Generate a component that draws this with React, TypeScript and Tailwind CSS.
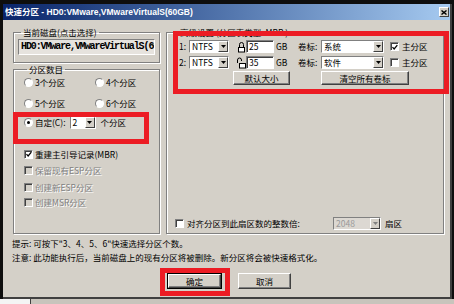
import React from 'react';

type Kids = { children?: React.ReactNode };

const Check = ({ checked = false, disabled = false }: { checked?: boolean; disabled?: boolean }) => (
  <span
    className={`flex h-[9px] w-[9px] shrink-0 items-center justify-center border border-t-[#808080] border-l-[#808080] border-r-white border-b-white shadow-[inset_1px_1px_0_#404040] ${
      disabled ? 'bg-[#D4D0C8]' : 'bg-white'
    }`}
  >
    {checked && (
      <svg width="7" height="7" viewBox="0 0 7 7" className="ml-px mt-px">
        <path d="M0.5 3 L2.5 5.2 L6.2 0.8" fill="none" stroke="#000" strokeWidth="1.5" />
      </svg>
    )}
  </span>
);

const Radio = ({ checked = false }: { checked?: boolean }) => (
  <span className="flex h-[9px] w-[9px] shrink-0 items-center justify-center rounded-full border border-t-[#808080] border-l-[#808080] border-r-white border-b-white bg-white">
    {checked && <span className="h-[3px] w-[3px] rounded-full bg-black" />}
  </span>
);

const Arrow = ({ disabled = false }: { disabled?: boolean }) => (
  <span className="flex w-[10px] shrink-0 items-center justify-center border border-t-white border-l-white border-r-[#404040] border-b-[#404040] bg-[#D4D0C8]">
    <svg width="5" height="3" viewBox="0 0 5 3">
      <polygon points="0,0 5,0 2.5,3" fill={disabled ? '#808080' : '#000'} />
    </svg>
  </span>
);

const Combo = ({ value, className = '', disabled = false }: { value: string; className?: string; disabled?: boolean }) => (
  <div
    className={`flex h-[13px] shrink-0 items-stretch border border-t-[#808080] border-l-[#808080] border-r-white border-b-white ${
      disabled ? 'bg-[#DCD8D2] text-[#9a9a9a]' : 'bg-white'
    } ${className}`}
  >
    <span className="flex min-w-0 flex-1 items-center overflow-hidden whitespace-nowrap pl-[2px] leading-[11px]">{value}</span>
    <Arrow disabled={disabled} />
  </div>
);

const Field = ({ value, className = '' }: { value: string; className?: string }) => (
  <div
    className={`flex h-[13px] shrink-0 items-center border border-t-[#808080] border-l-[#808080] border-r-white border-b-white bg-white pl-[2px] leading-[11px] shadow-[inset_1px_1px_0_#404040] ${className}`}
  >
    {value}
  </div>
);

const Btn = ({ children, className = '' }: Kids & { className?: string }) => (
  <div
    className={`flex shrink-0 items-center justify-center border border-t-white border-l-white border-r-[#404040] border-b-[#404040] bg-[#D4D0C8] shadow-[inset_-1px_-1px_0_#808080] leading-none ${className}`}
  >
    {children}
  </div>
);

const Lock = ({ open = false }: { open?: boolean }) => (
  <svg width="9" height="12" viewBox="0 0 9 12" className="shrink-0">
    {open ? (
      <path d="M0.5 6 V3 a2 2 0 0 1 4 0 V4" fill="none" stroke="#000" strokeWidth="1" />
    ) : (
      <path d="M2.5 6 V3.5 a2 2 0 0 1 4 0 V6" fill="none" stroke="#000" strokeWidth="1" />
    )}
    <rect x={open ? 2.5 : 1.5} y="6.5" width="6" height="4.5" fill="#fff" stroke="#000" strokeWidth="1" />
  </svg>
);

const Dim = ({ children }: Kids) => (
  <span className="text-[#808080] [text-shadow:1px_1px_0_#fff]">{children}</span>
);

const group = 'min-w-0 border border-[#808080] shadow-[inset_1px_1px_0_#fff,1px_1px_0_#fff]';

export default function App() {
  return (
    <div className="relative h-[304px] w-[454px] overflow-hidden bg-[#0e0e0e] font-['Noto_Sans_CJK_SC',sans-serif] text-[8.5px] text-black">
      <div className="ml-[3px] mt-[4px] flex h-[295px] w-[449px] flex-col border-r-2 border-b-2 border-r-[#404040] border-b-[#404040] bg-[#D4D0C8]">
        {/* title bar */}
        <div className="flex h-[16px] shrink-0 items-center bg-linear-to-r from-[#0A246A] to-[#A6CAF0] pl-[2px]">
          <span className="whitespace-nowrap font-['Liberation_Sans','Noto_Sans_CJK_SC',sans-serif] text-[8.5px] font-bold leading-none text-white">
            快速分区 - HD0:VMware,VMwareVirtualS(60GB)
          </span>
          <div className="ml-auto mr-px flex h-[10px] w-[10px] items-center justify-center border border-t-white border-l-white border-r-[#404040] border-b-[#404040] bg-[#D4D0C8]">
            <svg width="6" height="5" viewBox="0 0 6 5">
              <path d="M0.5 0.5 L5.5 4.5 M5.5 0.5 L0.5 4.5" stroke="#000" strokeWidth="1.4" />
            </svg>
          </div>
        </div>

        {/* body */}
        <div className="flex flex-1 flex-col pl-[10px] pt-[6px]">
          <div className="flex gap-[6px]">
            {/* left column */}
            <div className="flex w-[147px] shrink-0 flex-col">
              <fieldset className={`${group} px-[4px] pb-[7px]`}>
                <legend className="ml-[3px] px-[2px] leading-[12px]">当前磁盘(点击选择)</legend>
                <div className="mt-px flex h-[16px] w-full items-center overflow-hidden border border-t-[#808080] border-l-[#808080] border-r-white border-b-white bg-[#E6E3DE] pl-[2px]">
                  <span className="shrink-0 whitespace-nowrap font-['Liberation_Mono',monospace] text-[10px] font-bold leading-none tracking-[-1.1px]">
                    HD0:VMware,VMwareVirtualS(60GB)
                  </span>
                </div>
              </fieldset>

              <fieldset className={`${group} h-[171px] pl-[10px]`}>
                <legend className="ml-[3px] px-[2px] leading-[12px]">分区数目</legend>
                <div className="mt-px flex h-[12px] items-center">
                  <div className="flex w-[71px] items-center gap-[2px]">
                    <Radio />
                    <span>3个分区</span>
                  </div>
                  <div className="flex items-center gap-[2px]">
                    <Radio />
                    <span>4个分区</span>
                  </div>
                </div>
                <div className="mt-[9px] flex h-[12px] items-center">
                  <div className="flex w-[71px] items-center gap-[2px]">
                    <Radio />
                    <span>5个分区</span>
                  </div>
                  <div className="flex items-center gap-[2px]">
                    <Radio />
                    <span>6个分区</span>
                  </div>
                </div>
                <div className="mt-[7px] flex h-[13px] items-center">
                  <Radio checked />
                  <span className="ml-[2px]">自定(C):</span>
                  <Combo value="2" className="ml-[4px] w-[26px]" />
                  <span className="ml-[5px]">个分区</span>
                </div>
                <div className="mt-[19px] flex h-[12px] items-center gap-[2px]">
                  <Check checked />
                  <span>重建主引导记录(MBR)</span>
                </div>
                <div className="mt-[4px] flex h-[12px] items-center gap-[2px]">
                  <Check disabled />
                  <Dim>保留现有ESP分区</Dim>
                </div>
                <div className="mt-[5px] flex h-[12px] items-center gap-[2px]">
                  <Check disabled />
                  <Dim>创建新ESP分区</Dim>
                </div>
                <div className="mt-[3px] flex h-[12px] items-center gap-[2px]">
                  <Check disabled />
                  <Dim>创建MSR分区</Dim>
                </div>
              </fieldset>
            </div>

            {/* right group */}
            <fieldset className={`${group} h-[208px] w-[278px] shrink-0 pl-[8px]`}>
              <legend className="ml-[3px] px-[2px] leading-[12px]">高级设置 (分区表类型: MBR )</legend>
              {[
                { n: '1:', size: '25', label: '系统', primary: true, open: false },
                { n: '2:', size: '35', label: '软件', primary: false, open: true },
              ].map((r, i) => (
                <div key={r.n} className={`flex h-[13px] items-center ${i === 0 ? 'mt-[2px]' : 'mt-[3px]'}`}>
                  <span className="ml-[4px] w-[10px] shrink-0">{r.n}</span>
                  <Combo value="NTFS" className="w-[40px]" />
                  <span className="ml-[8px] flex shrink-0">
                    <Lock open={r.open} />
                  </span>
                  <Field value={r.size} className="w-[28px]" />
                  <span className="ml-[2px] w-[22px] shrink-0">GB</span>
                  <span className="w-[23px] shrink-0">卷标:</span>
                  <Combo value={r.label} className="w-[63px]" />
                  <span className="ml-[6px] shrink-0">
                    <Check checked={r.primary} />
                  </span>
                  <span className="ml-[3px] shrink-0">主分区</span>
                </div>
              ))}
              <div className="mt-[2px] flex h-[14px] items-center">
                <Btn className="ml-[58px] h-[14px] w-[57px]">默认大小</Btn>
                <Btn className="ml-[31px] h-[14px] w-[88px]">清空所有卷标</Btn>
              </div>
              <div className="mt-[132px] flex h-[13px] items-center">
                <Check />
                <span className="ml-[3px] w-[146px] shrink-0">对齐分区到此扇区数的整数倍:</span>
                <Combo value="2048" disabled className="w-[48px]" />
                <span className="ml-[4px]">扇区</span>
              </div>
            </fieldset>
          </div>

          <p className="-ml-px mt-[2px] leading-[14px]">提示: 可按下"3、4、5、6"快速选择分区个数。</p>
          <p className="-ml-px leading-[14px]">注意: 此功能执行后，当前磁盘上的现有分区将被删除。新分区将会被快速格式化。</p>

          <div className="mt-[9px] flex items-center">
            <div className="ml-[154px] border border-black">
              <Btn className="h-[14px] w-[53px]">确定</Btn>
            </div>
            <Btn className="ml-[16px] h-[16px] w-[53px]">取消</Btn>
          </div>
        </div>
      </div>

      {/* strip below the window */}
      <div className="flex h-[5px]">
        <div className="w-[30px] bg-[#F4F4F4]" />
        <div className="w-px bg-[#404040]" />
        <div className="flex-1 bg-[#C8C4BC]" />
      </div>

      {/* red annotation boxes */}
      <div className="pointer-events-none absolute left-[13px] top-[112px] h-[32px] w-[136px] border-[5px] border-[#EC1C24]" />
      <div className="pointer-events-none absolute left-[173px] top-[31px] h-[63px] w-[276px] border-[5px] border-[#EC1C24]" />
      <div className="pointer-events-none absolute left-[160px] top-[268px] h-[28px] w-[70px] border-[5px] border-[#EC1C24]" />
    </div>
  );
}
